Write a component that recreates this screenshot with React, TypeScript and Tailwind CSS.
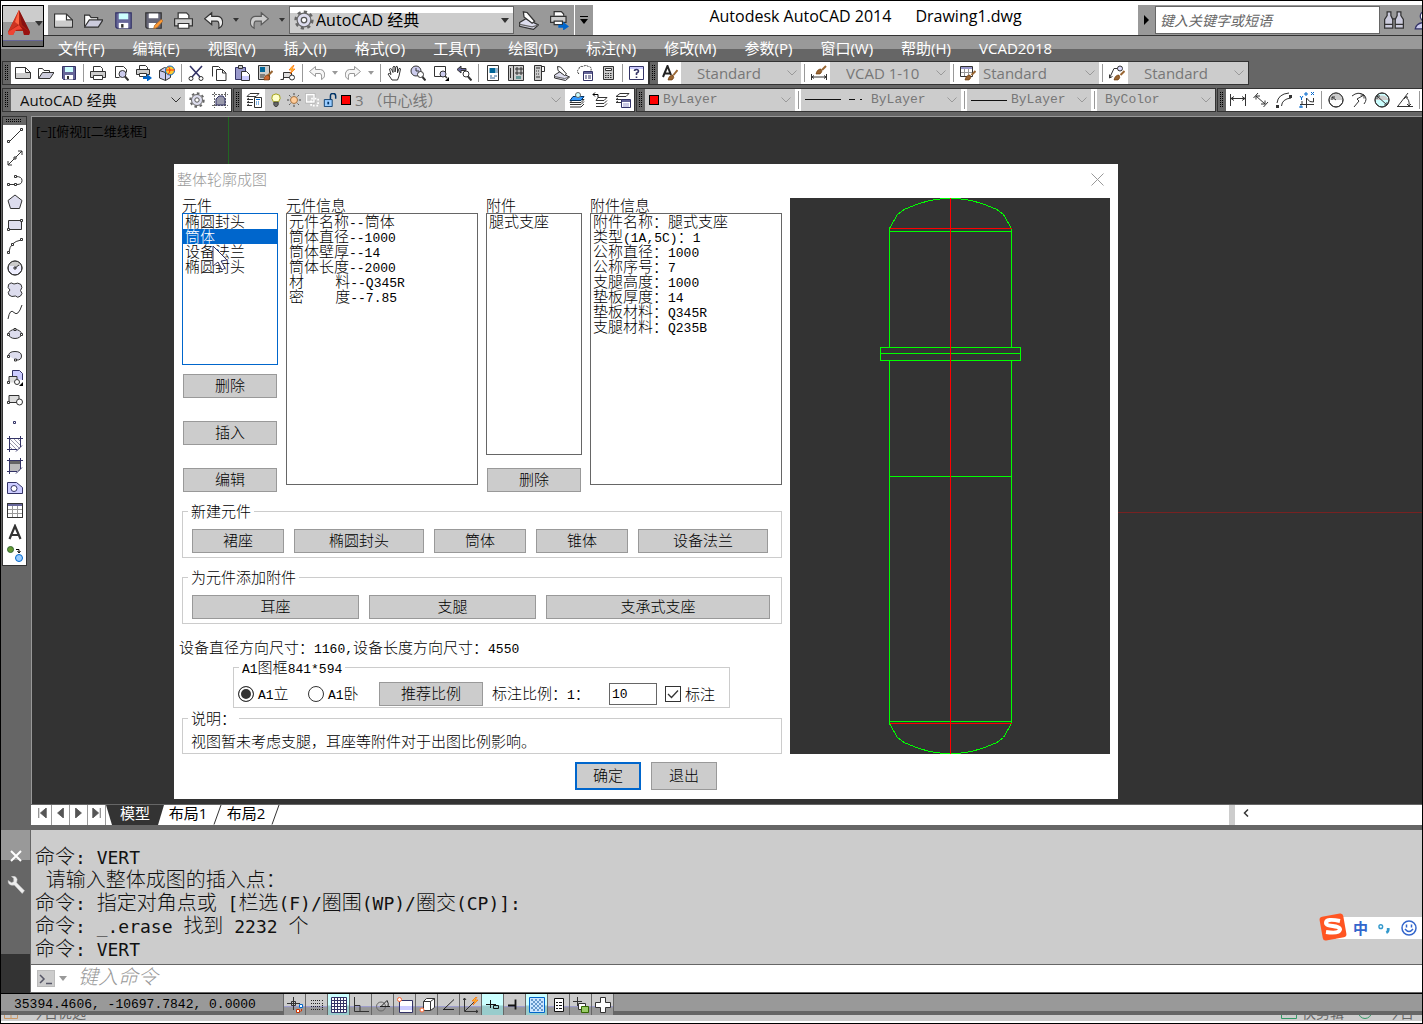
import { useState, type ReactNode } from "react";
import clsx from "clsx";

const ICONS: Record<string, ReactNode> = {
  new: (
    <>
      <path d="M.5 2.5h10l5 5v6H.5z" fill="#fff" />
      <path d="M1 8h14v5H1z" fill="#ccc" stroke="none" />
      <path d="M10.5 2.5v5h5" />
    </>
  ),
  open: (
    <>
      <path d="M.5 13V3.5h4l1.5 2h5.500v2" fill="#fff" />
      <path d="M.5 13.500l4-6h11.500l-4 6z" fill="#ccd" />
    </>
  ),
  save: (
    <>
      <path d="M1.500 1.500h13v13h-12l-1-1z" fill="#666699" stroke="#333366" />
      <path d="M4 2h8v5H4z" fill="#cff" stroke="none" />
      <path d="M4 10h8v4.500H4z" fill="#fff" stroke="none" />
      <path d="M6 11h2v3H6z" fill="#333" stroke="none" />
    </>
  ),
  saveAs: (
    <>
      <path d="M1.500 1.500h13v13h-12l-1-1z" fill="#667" stroke="#333" />
      <path d="M4 2h8v4H4zM4 10h6v4.500H4z" fill="#fff" stroke="none" />
      <path d="M8 15l1-3 5.500-5 1.500 1.500-5 5.500z" fill="#f93" stroke="#963" strokeWidth=".6" />
    </>
  ),
  print: (
    <>
      <path d="M3.500 6V1.500h7l2 2V6" fill="#fff" />
      <path d="M.5 6.500h15v6H.5z" fill="#ccc" />
      <path d="M3.500 10.500h9v4h-9z" fill="#fff" />
    </>
  ),
  preview: (
    <>
      <path d="M2.500 12.500v-11h8l3 3v3M2.500 12.500h4" fill="#fff" />
      <circle cx="9.500" cy="9" r="3.500" fill="#cce" />
      <path d="M12 11.500l3.500 4" strokeWidth="2" />
    </>
  ),
  publish: (
    <>
      <path d="M3.500 4V.5h6l2 2V4" fill="#fff" />
      <path d="M.5 4.500h13v5H.5z" fill="#ccc" />
      <path d="M3.500 8.500h7v3h-7z" fill="#fff" />
      <path d="M7 11.500h4V9l5 4-5 3.500V14H7z" fill="#06c" stroke="none" />
    </>
  ),
  sphere: (
    <>
      <path d="M.5 5.500l5-3 6 2v8l-5 3-6-2.500z" fill="#cce" />
      <path d="M.5 5.500l6 2v8" />
      <circle cx="11" cy="5.500" r="4.500" fill="#fc3" stroke="#06c" />
      <path d="M9 1.500q4 3 0 8M7 5h9" stroke="#f30" />
    </>
  ),
  cut: (
    <>
      <path d="M2 1l10 11M14 1L4 12" stroke="#336" strokeWidth="1.600" />
      <circle cx="3" cy="13.500" r="2" />
      <circle cx="13" cy="13.500" r="2" />
    </>
  ),
  copy: (
    <>
      <path d="M1.500 11.500v-10h6l2 2" fill="#fff" />
      <path d="M5.500 4.500h6l3.500 3.500v7.500H5.500z" fill="#fff" />
      <path d="M11.500 4.500V8H15" />
    </>
  ),
  paste: (
    <>
      <path d="M1.500 2.500h10v12h-10z" fill="#99c" stroke="#336" />
      <path d="M4.500.5h4v3h-4z" fill="#ccc" />
      <path d="M7.500 6.500h5l3 3v6h-8z" fill="#fff" />
      <path d="M8 11h7v4H8z" fill="#ccf" stroke="none" />
    </>
  ),
  match: (
    <>
      <path d="M1.500.5h11v14h-11z" fill="#ccc" />
      <path d="M3 2h5v5H3z" fill="#069" stroke="none" />
      <path d="M3 10h5M3 12h4" />
      <path d="M15.500 6l-5 5" stroke="#963" strokeWidth="2" />
      <path d="M7 15q0-5 4-5 3 2 1 5z" fill="#c63" stroke="#630" strokeWidth=".6" />
    </>
  ),
  block: (
    <>
      <path d="M.5 14.500h3v-7h8v5h-8" fill="#ddd" />
      <circle cx="12" cy="12.500" r="2.500" fill="#fff" />
      <path d="M13 .5l-4 4.500h3l-2 4 5-5h-3l2-3.500z" fill="#fc3" stroke="#f60" strokeWidth=".7" />
    </>
  ),
  undo: <path d="M6.500 1.500L.5 6.500l6 5v-3H11q2 0 1.500 6 4-2 3-6.500-1-3.500-4-3.500h-5z" fill="#eee" />,
  redo: <path d="M9.500 1.500l6 5-6 5v-3H5q-2 0-1.500 6-4-2-3-6.500 1-3.500 4-3.500h5z" fill="#eee" />,
  pan: (
    <path
      d="M5 15L1 9q1-1.500 3 .5L2.500 4q1-1 2 0L6 7.500V2q1-1.500 2 0v5l1-5.500q1.500-.5 1.500.5v6l1.500-4.500q1.500-.5 1.500.5L12 11l-1.500 4z"
      fill="#fff"
    />
  ),
  zoomRt: (
    <>
      <circle cx="6" cy="6" r="5" fill="#cce" />
      <path d="M6 3v3h3" />
      <circle cx="10.500" cy="9.500" r="3" fill="#fff" />
      <path d="M12.500 12l3 3.500" strokeWidth="2" />
    </>
  ),
  zoomWin: (
    <>
      <path d="M1.500 1.500h11v10h-11z" fill="#fff" />
      <circle cx="10" cy="9" r="3" fill="#cce" />
      <path d="M12 11l2 2" strokeWidth="1.500" />
      <path d="M16 12v4h-4z" fill="#000" stroke="none" />
    </>
  ),
  zoomPrev: (
    <>
      <path d="M5 1L1 4.500 5 8V5.500h5v-2H5z" fill="#669" />
      <circle cx="10" cy="9" r="3" fill="#fff" />
      <path d="M12 11.500l3.500 4" strokeWidth="2" />
    </>
  ),
  props: (
    <>
      <path d="M2.500.5h11v15h-11z" fill="#fff" />
      <path d="M4.500 3h6v5h-6z" fill="#069" stroke="none" />
      <path d="M12 3v5M5 11h2m2 0h3M5 13h5" stroke="#369" />
    </>
  ),
  center: (
    <>
      <path d="M.5.5h15v15H.5z" fill="#ccc" />
      <path d="M5.500.5v15M2.500 3v10M8 3h2v2H8zM12 3h2v2h-2zM8 7h2v2H8zM12 7h2v2h-2z" />
      <path d="M8 11h5v3H8z" fill="#699" stroke="none" />
    </>
  ),
  palettes: (
    <>
      <path d="M3.500.5h7v15h-7z" fill="#ccc" />
      <path d="M10.500 1.500h3v5h-3M5 3h4M5 6h1m1 0h1M5 9h1m1 0h1M5 12h4" />
    </>
  ),
  sheets: (
    <>
      <path d="M.5 10l5-3 10 5-4 3.500L.5 13z" fill="#dde" />
      <path d="M.5 11.500l10 2 5-1.500" stroke="#666" />
      <path d="M3.500 1.500l3 .5 6 7-2 1.500-6.500-5z" fill="#fff" />
    </>
  ),
  markup: (
    <>
      <path d="M2 9Q-1 6 2 4q0-3 4-2.500 3-2 5 0 4 0 3 4" fill="#fff" strokeDasharray="2 1" />
      <path d="M6.500 6.500h9v9h-9z" fill="#fff" stroke="#336" />
      <path d="M7 7h8v2H7z" fill="#669" stroke="none" />
      <path d="M8 11h2m1 0h3M8 13h2m1 0h3" stroke="#336" />
    </>
  ),
  calc: (
    <>
      <path d="M3.500 1.500h10v13h-10z" fill="#ccc" />
      <path d="M5.500 3.500h6v2h-6z" fill="#fff" />
      <path d="M5 8.500h7M5 10.500h7M5 12.500h7" strokeDasharray="1.500 1" />
    </>
  ),
  help: (
    <>
      <path d="M.5 1.500h14v13H.5z" fill="#fff" stroke="#336" />
      <path d="M1 2h13v2H1z" fill="#ccf" stroke="none" />
      <path d="M5.500 6q0-1.500 2-1.500t2 1.700q0 1-2 2V10m0 1.500V13" stroke="#336" strokeWidth="1.600" />
    </>
  ),
  textStyle: (
    <>
      <path d="M1 12L5.500 1 9 10M3 8.500h5" stroke="#222" strokeWidth="2" />
      <path d="M15.500 5l-4 5" stroke="#963" strokeWidth="2" />
      <path d="M6 15q1-5 5-5 2 3-1 5z" fill="#963" stroke="#630" strokeWidth=".6" />
    </>
  ),
  dimStyle: (
    <>
      <path d="M.5 9v6M15.500 9v6M1 12h14M3 10.500L1 12l2 1.500M13 10.500l2 1.500-2 1.500" />
      <path d="M15 1l-4 4" stroke="#963" strokeWidth="2" />
      <path d="M5 9q1-5 5-5 2 3-1 5z" fill="#963" stroke="#630" strokeWidth=".6" />
    </>
  ),
  tableStyle: (
    <>
      <path d="M.5 1.500h12v10H.5z" fill="#fff" />
      <path d="M1 2h11v2H1z" fill="#99c" stroke="none" />
      <path d="M1 7.500h11M4.500 4v7M8.500 4v7" stroke="#999" />
      <path d="M15.500 6l-4 4" stroke="#963" strokeWidth="2" />
      <path d="M5 15q1-5 5-5 2 3-1 5z" fill="#963" stroke="#630" strokeWidth=".6" />
    </>
  ),
  leaderStyle: (
    <>
      <path d="M.5 13L5 3.500h4M.5 13V9.500M.5 13l3-1.500" />
      <circle cx="11" cy="3.500" r="2.500" fill="#ddf" />
      <path d="M15.500 6l-4 4" stroke="#963" strokeWidth="2" />
      <path d="M5 15q1-5 5-5 2 3-1 5z" fill="#963" stroke="#630" strokeWidth=".6" />
    </>
  ),
  gear: (
    <>
      <circle cx="8" cy="8" r="6.700" strokeWidth="2" strokeDasharray="2.600 2.600" stroke="#666" />
      <circle cx="8" cy="8" r="5.500" fill="#dde" stroke="#666" />
      <circle cx="8" cy="8" r="2.200" fill="#fff" stroke="#555" />
    </>
  ),
  workspace: (
    <>
      <path d="M2.500 0v16M13.500 0v16M0 2.500h16M0 13.500h16" stroke="#666" strokeDasharray="2 1" />
      <path d="M4 13V7l3-3h4l2 3v6z" fill="#99a" stroke="#336" />
    </>
  ),
  layerProps: (
    <>
      <path d="M4 1.500h9l-3 3H1zM1 7.500l2-1.500M1 7.500h6M1 10.500l2-1.500M1 10.500h6M1 13.500l2-1.500M1 13.500h5" />
      <path d="M8.500 5.500h7v10h-7z" fill="#fff" />
      <path d="M10 7.500h4M10 10h1m1 0h1m-3 2h1m1 0h1" stroke="#06c" />
    </>
  ),
  bulb: (
    <>
      <path d="M5 10q-3-4-1-7.500 4-3 8 0 2 3.500-1 7.500z" fill="#ffc" stroke="#990" />
      <path d="M5.500 10.500h5v3l-1.500 2h-2l-1.500-2z" fill="#666" />
    </>
  ),
  sun: (
    <>
      <circle cx="8" cy="8" r="4" fill="#fc9" stroke="#963" />
      <path d="M8 0v2.500M8 13.500V16M0 8h2.500M13.500 8H16M2.500 2.500L4 4M12 12l1.500 1.500M13.500 2.500L12 4M4 12l-1.500 1.500" />
    </>
  ),
  freeze: (
    <>
      <path d="M1.500 1.500h9v9h-9z" fill="#ccc" stroke="#fff" strokeWidth="2" />
      <path d="M.5.5h11v11H.5z" stroke="#999" strokeWidth=".6" />
      <path d="M7 6.500h8v8H7z" stroke="#fff" strokeWidth="2" strokeDasharray="2 2" />
    </>
  ),
  unlock: (
    <>
      <path d="M1.500 7.500h9v8h-9z" fill="#9cf" stroke="#036" />
      <path d="M8.500 7V3.500q0-3 3-3t3 3v3" stroke="#036" strokeWidth="1.700" />
      <path d="M6 10v3" stroke="#036" strokeWidth="2" />
    </>
  ),
  layerCur: (
    <>
      <path d="M4 7.500h11l-3 3H1zM1 13l1-1M1 12.500h11l3-3M1 15h11l3-3" fill="#fff" />
      <path d="M4 4.500h11l-3 4H1z" fill="#39f" stroke="#036" />
      <circle cx="9" cy="3" r="2.500" fill="#cff" stroke="#666" />
    </>
  ),
  layerPrev: (
    <>
      <path d="M6 5.500h9l-3 3H4zM4 11.500h8l3-3M4 14.500h8l3-3" />
      <path d="M1 2.500h5v3M3 .5l-2 2 2 2" stroke="#000" />
    </>
  ),
  layerState: (
    <>
      <path d="M5 1.500h9l-3 3H1zM1 7.500h6M1 7.500l2-1.500M1 10.500h5M1 10.500l2-1.500" />
      <path d="M6.500 7.500h9v8h-9z" fill="#fff" stroke="#336" />
      <path d="M7 8h8v2H7z" fill="#669" stroke="none" />
      <path d="M8 12h6M8 14h6" stroke="#99c" />
    </>
  ),
  dimLinear: <path d="M.5 2v12M15.500 2v12M1 6.500h14M4 4.500l-3 2 3 2M12 4.500l3 2-3 2" />,
  dimAligned: <path d="M3 4l9 8M3 7.500V4h4M12 8.500V12H8M.5 6L5 1M10.500 15l4.500-5" />,
  dimArc: (
    <>
      <path d="M1 11Q2 2 13 1M5.500 14Q6 7 15 6" />
      <path d="M0 13h3v3H0zM13 3h3v3h-3z" fill="#333" stroke="none" />
    </>
  ),
  dimOrd: (
    <>
      <path d="M1 12.500h14M7.500 16V6q3 5 7 4V6M3 12V9" />
      <path d="M1 4l1.500 2L4 4M2.500 6v2M6 1h2v2H6zM12 0l3 3M15 0l-3 3M1 14h2v2H1z" stroke="#06c" />
    </>
  ),
  dimRadius: (
    <>
      <circle cx="8" cy="8" r="7" fill="#fff" />
      <path d="M1 8a7 7 0 0 1 14 0z" fill="#ccc" stroke="none" />
      <path d="M8 8L4 5M4 8V5h3" />
      <circle cx="8" cy="8" r="7" />
    </>
  ),
  dimJog: <path d="M1 4q6-5 12-1 4 4 0 9M3 15l5-6-2-2 7-4M9.500 3H13v3.500" />,
  dimDia: (
    <>
      <circle cx="8" cy="8" r="7" fill="#cff" />
      <path d="M1.500 8a7 7 0 0 1 13 0z" fill="#ccc" stroke="none" />
      <path d="M3 4l10 9M3 7V4h3M10 13h3v-3" />
      <circle cx="8" cy="8" r="7" />
    </>
  ),
  dimAngle: <path d="M0 14.500h16M1 14L11 1M8 5q5 2 4 9M7 7l2-2.500 2 1M10 12l2 2 2-2" />,
  line: (
    <>
      <path d="M2 14L14 2" />
      <path d="M.5 12.500h2v2h-2zM13.500.5h2v2h-2z" fill="#fff" />
    </>
  ),
  xline: (
    <>
      <path d="M1 15L15 1M1 11v4h4M11 1h4v4" />
      <path d="M7 7h2v2H7z" fill="#fff" />
    </>
  ),
  pline: (
    <>
      <path d="M2 12.500h8q5 0 5-4t-6-4" />
      <path d="M.5 11.500h2v2h-2zM7.500 11.500h2v2h-2zM7.500 3.500h2v2h-2z" fill="#fff" />
    </>
  ),
  polygon: <path d="M8 1l7 5.500-2.500 8h-9L1 6.500z" fill="#dde" />,
  rect: (
    <>
      <path d="M1.500 4.500h13v9h-13z" fill="#dde" />
      <path d="M.5 12.500h2v2h-2zM13.500 3.500h2v2h-2z" fill="#fff" />
    </>
  ),
  arc: (
    <>
      <path d="M2 14Q3 4 14 2" />
      <path d="M.5 13.500h2v2h-2zM4.500 5.500h2v2h-2zM13.500.5h2v2h-2z" fill="#fff" />
    </>
  ),
  circle: (
    <>
      <circle cx="8" cy="8" r="7" fill="#eef" />
      <path d="M1.500 6a7 7 0 0 1 13 0z" fill="#ccc" stroke="none" />
      <circle cx="8" cy="8" r="7" />
      <path d="M8 8l4-3M7 7h2v2H7z" />
    </>
  ),
  cloud: (
    <path
      d="M3 8Q0 6 1.500 2.500 4-.5 7 2q4-2 7 .5 2 3-.5 6 3 3 0 5.500-3 2.500-5 0-4 1.500-6.500-1Q0 10 3 8z"
      fill="#dde"
    />
  ),
  spline: <path d="M1 15Q3 4 7 8.500t8-7.500" />,
  ellipse: (
    <>
      <ellipse cx="8" cy="8" rx="6.500" ry="4.500" fill="#dde" />
      <path d="M.5 7.500h2v2h-2zM13.500 7.500h2v2h-2zM7 2.500h2v2H7z" fill="#fff" />
    </>
  ),
  ellipseArc: (
    <>
      <path d="M1.500 8q0-4.500 6.500-4.500T14.500 8 9 12" fill="#dde" />
      <path d="M.5 7.500h2v2h-2zM7.500 11h2v2h-2z" fill="#fff" />
    </>
  ),
  insert: (
    <>
      <path d="M5.500 8V.5h7l3 3V10" fill="#ccf" stroke="#336" />
      <path d="M2 12.500v-6h8v6" fill="#ddd" />
      <circle cx="10" cy="12" r="2.500" fill="#fff" />
      <path d="M.5 11.500h2v2h-2z" fill="#fff" />
      <path d="M16 12v4h-4z" fill="#000" stroke="none" />
    </>
  ),
  makeBlock: (
    <>
      <path d="M2 10.500v-7h10v7z" fill="#ddd" />
      <circle cx="12.500" cy="10" r="3" fill="#fff" />
      <path d="M.5 9.500h2v2h-2z" fill="#fff" />
    </>
  ),
  point: <path d="M6.500 7.500h2v2h-2z" stroke="#336" />,
  hatch: (
    <>
      <path d="M3 3l10 10M3 7l6 6M7 3l6 6M3 11l2 2M11 3l2 2" stroke="#99a" />
      <path d="M2.500 0v16M13.500 0v11M0 2.500h16M0 13.500h10M9 15.500l6-6" stroke="#336" />
    </>
  ),
  gradient: (
    <>
      <path d="M3 3h10v3H3z" fill="#666" stroke="none" />
      <path d="M3 6h10v7H3z" fill="#bbb" stroke="none" />
      <path d="M2.500 0v16M13.500 0v11M0 2.500h16M0 13.500h10M9 15.500l6-6" stroke="#336" />
    </>
  ),
  region: (
    <>
      <path d="M.5 2.500h9l6 5v6H.5z" fill="#ccf" stroke="#336" />
      <circle cx="7" cy="8.500" r="3" fill="#fff" stroke="#336" />
    </>
  ),
  table: (
    <>
      <path d="M.5 1.500h15v14H.5z" fill="#fff" />
      <path d="M1 2h14v2H1z" fill="#669" stroke="none" />
      <path d="M1 7.500h14M1 11.500h14M5.500 4v11M10.500 4v11" stroke="#999" />
      <path d="M.5 1.500h15v14H.5z" />
    </>
  ),
  mtext: <path d="M2.500 15L8 2l5.500 13M4.500 11h7" stroke="#333" strokeWidth="2.200" />,
  addSel: (
    <>
      <circle cx="3.500" cy="3.500" r="3" fill="#693" stroke="#363" />
      <circle cx="12" cy="12" r="3.500" fill="#9cf" stroke="#06c" />
      <path d="M9 3.500h3V6M10.500 5L12 7l1.500-2" stroke="#000" />
    </>
  ),
  infer: (
    <>
      <path d="M6.500 0v13M0 6.500h13M4.500 4.500h4v4h-4z" />
      <path d="M12.500 7.500h3v3h-3z" fill="#fff" stroke="#06c" />
      <path d="M9.500 12.500h3v3h-3zM14.500 12v2h-2" fill="#fff" stroke="#c30" />
    </>
  ),
  snap: <path d="M2 3.500h9M2 6.500h9M2 9.500h9M2 12.500h9M13.500 3v1m0 2v7" stroke="#222" strokeDasharray="1 1" />,
  grid: (
    <path
      d="M.5.5h15v15H.5zM3.500.5v15M6.500.5v15M9.500.5v15M12.500.5v15M.5 3.500h15M.5 6.500h15M.5 9.500h15M.5 12.500h15"
      fill="#fff"
      stroke="#336"
    />
  ),
  ortho: <path d="M1.500 0v14.500H16M2 8.500h5v6" />,
  polar: (
    <>
      <circle cx="6" cy="9.500" r="4.500" stroke="#666" />
      <path d="M5 9.500h10M6 9.500l6-6q2 3 1 6" stroke="#222" />
    </>
  ),
  osnap: (
    <>
      <path d="M2.500 3.500h13v12h-13z" fill="#fff" stroke="#336" />
      <path d="M3 9h12v4H3z" fill="#ccf" stroke="none" />
      <circle cx="2.500" cy="2.500" r="2" fill="#fff" stroke="#f63" />
    </>
  ),
  osnap3d: (
    <>
      <path d="M4.500 4.500l3-3h8v9l-4 3h-7z" fill="#fff" />
      <path d="M4.500 4.500h7v9M11.500 4.500l4-3" />
      <circle cx="3" cy="13" r="2" fill="#fff" stroke="#f63" />
    </>
  ),
  otrack: <path d="M2 12.500h11M3 12L13 2.500" stroke="#222" />,
  ducs: (
    <>
      <path d="M1.500 1v13.500H15M2 14L11 5M0 3l1.500-2L3 3M13 13l2 1.500-2 1.500" />
      <path d="M13 0l-4 4h3l-2 4 5-5h-3l2-3z" fill="#fc3" stroke="#f60" strokeWidth=".7" />
    </>
  ),
  dyn: <path d="M1 7.500h10M5.500 3v8M8.500 8.500h5v3h-5z" stroke="#111" />,
  lwt: <path d="M1 8.500h8M8.500 2.500v10" stroke="#111" strokeWidth="1.800" />,
  tpy: (
    <>
      <path d="M.5.5h15v15H.5z" fill="#cce6ff" stroke="#06c" />
      <path d="M2 3h12M2 7h12M2 11h12" stroke="#69c" strokeDasharray="2 2" strokeWidth="2" />
      <path d="M4 5h10M4 9h10M4 13h10" stroke="#69c" strokeDasharray="2 2" strokeWidth="2" />
    </>
  ),
  qp: (
    <>
      <path d="M3.500 1.500h9v13h-9z" fill="#fff" stroke="#111" />
      <path d="M5 5.500h2m1 0h3M5 8.500h2m1 0h3M5 11.500h2m1 0h3" stroke="#111" />
    </>
  ),
  sc: (
    <>
      <path d="M4.500 0v9M0 4.500h9" />
      <path d="M5.500 6.500h7v6h-7z" fill="#fff" />
      <path d="M8.500 9.500h7v6h-7z" fill="#9c6" stroke="#360" />
    </>
  ),
  am: <path d="M5.500.5h5v5h5v5h-5v5h-5v-5h-5v-5h5z" fill="#fff" />,
  binoculars: (
    <>
      <path d="M.5 14.500v-7l2-3V1.500h3v3l1.500 3v7zM9 14.500v-7l1.500-3v-3h3v3l2 3v7z" fill="#ccd" />
      <path d="M6.500 7h3M.5 11.500H7M9 11.500h6.500" />
    </>
  ),
  person: (
    <>
      <circle cx="9" cy="5" r="4" fill="#fff" stroke="#336" />
      <path d="M1 15q1-5 8-5t7 5z" fill="#cce" stroke="#336" />
    </>
  ),
  wrench: (
    <path d="M1 4l3 2 2-1V2L4 .5q4-1 5 2.500L8.500 6l7 7-2 2.500-7-7.500Q1 9 1 4z" fill="#eee" stroke="#ccc" strokeWidth=".5" />
  ),
};

function Icon({ name, className = "size-4" }: { name: string; className?: string }) {
  return (
    <svg viewBox="0 0 16 16" className={clsx("shrink-0", className)} fill="none" stroke="#333" aria-hidden="true">
      {ICONS[name]}
    </svg>
  );
}

function Caret({ className = "text-[#333]" }: { className?: string }) {
  return (
    <svg viewBox="0 0 8 5" className={clsx("w-2 shrink-0", className)} fill="currentColor" aria-hidden="true">
      <path d="M0 0h8L4 5z" />
    </svg>
  );
}

const LATIN = "font-['Liberation_Mono',monospace] text-[13px]";
const LATIN_LG = "font-['DejaVu_Sans_Mono',monospace] text-[18px]";

// Latin runs are set in a half-width face next to the full-width glyphs.
function Mono({ text, latin = LATIN }: { text: string; latin?: string }) {
  return (
    <>
      {text.split(/([\x20-\x7e]+)/).map((part, i) =>
        i % 2 ? (
          <span key={i} className={clsx("whitespace-pre", latin)}>
            {part}
          </span>
        ) : (
          part
        ),
      )}
    </>
  );
}

function Dots({ className }: { className: string }) {
  return (
    <svg className={className} aria-hidden="true">
      <defs>
        <pattern id="dots" width="2" height="2" patternUnits="userSpaceOnUse">
          <rect width="1" height="1" fill="#000" />
        </pattern>
      </defs>
      <rect width="100%" height="100%" fill="url(#dots)" />
    </svg>
  );
}

function Grip() {
  return (
    <div className="flex w-2 shrink-0 items-center justify-center bg-[#666]">
      <Dots className="h-4 w-1" />
    </div>
  );
}

function Strip({ children, className }: { children: ReactNode; className?: string }) {
  return (
    <div className={clsx("flex h-6 shrink-0 border border-[#333] bg-white", className)}>
      <Grip />
      {children}
    </div>
  );
}

// "|" is a separator, "v" a small drop-down arrow, anything else an icon button
function Tools({ items }: { items: string[] }) {
  return (
    <>
      {items.map((name, i) => {
        if (name === "|") {
          return (
            <span key={i} className="flex w-[6px] shrink-0 items-center justify-center">
              <span className="h-[18px] w-px bg-[#999]" />
            </span>
          );
        }
        if (name === "v") {
          return (
            <button key={i} aria-label="more" className="flex w-[13px] shrink-0 items-center justify-center">
              <Caret className="w-[6px] text-[#999]" />
            </button>
          );
        }
        return (
          <button
            key={i}
            aria-label={name}
            className={clsx(
              "flex w-[23px] shrink-0 items-center justify-center",
              (name === "undo" || name === "redo") && "opacity-50",
            )}
          >
            <Icon name={name} />
          </button>
        );
      })}
    </>
  );
}

interface ComboProps {
  label: string;
  value: string;
  className: string;
  children?: ReactNode;
  dark?: boolean;
  font?: string;
}

function Combo({ label, value, className, children, dark, font = "text-[15px]" }: ComboProps) {
  return (
    <div className={clsx("relative flex shrink-0 items-center gap-1 bg-[#ccc]", className)}>
      {children}
      <select
        aria-label={label}
        className={clsx("h-full min-w-0 flex-1 appearance-none bg-transparent pr-5", dark ? "text-[#111]" : "text-[#777]", font)}
      >
        <option>{value}</option>
      </select>
      <svg
        viewBox="0 0 10 6"
        className={clsx("pointer-events-none absolute right-1 top-2 w-[10px]", dark ? "stroke-[#333]" : "stroke-[#999]")}
        fill="none"
      >
        <path d="M.5.5L5 5 9.500.5" />
      </svg>
    </div>
  );
}

const MENUS = [
  "文件(F)", "编辑(E)", "视图(V)", "插入(I)", "格式(O)", "工具(T)", "绘图(D)",
  "标注(N)", "修改(M)", "参数(P)", "窗口(W)", "帮助(H)", "VCAD2018",
];

function TitleBar() {
  return (
    <header className="flex h-[34px] shrink-0 items-end bg-white pl-[47px]">
      <div className="flex h-[30px] items-center bg-[#999]">
        {["new", "open", "save", "saveAs", "print", "undo"].map((name) => (
          <button key={name} aria-label={name} className="flex w-[30px] justify-center">
            <Icon name={name} className="size-[19px]" />
          </button>
        ))}
        <button aria-label="undo list" className="flex w-[16px] justify-center">
          <Caret className="w-[6px] text-[#333]" />
        </button>
        <button aria-label="redo" className="flex w-[30px] justify-center opacity-60">
          <Icon name="redo" className="size-[19px]" />
        </button>
        <button aria-label="redo list" className="flex w-[15px] justify-center">
          <Caret className="w-[6px] text-[#333]" />
        </button>
        <div className="relative flex h-7 w-[225px] items-center border border-[#666] bg-[linear-gradient(#fff_25%,#ccc_25%)] pl-1">
          <Icon name="gear" className="size-5" />
          <select aria-label="工作空间" className="h-full min-w-0 flex-1 appearance-none bg-transparent pl-[2px] text-base text-black">
            <option>AutoCAD 经典</option>
          </select>
          <span className="pointer-events-none absolute right-1">
            <Caret />
          </span>
        </div>
        <button aria-label="sheets" className="flex w-[30px] justify-center">
          <Icon name="sheets" className="size-5" />
        </button>
        <button aria-label="publish" className="flex w-[30px] justify-center">
          <Icon name="publish" className="size-[19px]" />
        </button>
      </div>
      <button aria-label="customize" className="ml-px flex h-[30px] w-[18px] shrink-0 flex-col items-center justify-center gap-[2px] bg-[#999]">
        <span className="h-px w-2 bg-black" />
        <Caret className="text-black" />
      </button>
      <h1 className="flex h-[30px] flex-1 justify-center gap-6 whitespace-nowrap text-base leading-[22px] text-black">
        <span>Autodesk AutoCAD 2014</span>
        <span>Drawing1.dwg</span>
      </h1>
      <div className="flex h-[30px] w-[284px] shrink-0 items-center overflow-hidden bg-[#999]">
        <svg viewBox="0 0 5 10" className="mx-[6px] w-[5px] shrink-0">
          <path d="M0 0l5 5-5 5z" />
        </svg>
        <input
          aria-label="搜索"
          placeholder="键入关键字或短语"
          className="h-7 w-[225px] shrink-0 border border-[#666] bg-white px-1 text-sm italic placeholder:text-[#666]"
        />
        <button aria-label="search" className="ml-1 shrink-0">
          <Icon name="binoculars" className="size-5" />
        </button>
        <button aria-label="sign in" className="ml-[10px] shrink-0">
          <Icon name="person" className="size-5" />
        </button>
      </div>
    </header>
  );
}

function AppButton() {
  return (
    <button
      aria-label="AutoCAD"
      className="absolute left-[1px] top-1 flex h-[42px] w-[42px] flex-col border border-black bg-[linear-gradient(#ccc_40%,#999_40%)] pt-1"
    >
      <span className="flex items-center gap-1 pl-1">
        <svg viewBox="0 0 24 26" className="h-[26px] w-6">
          <path d="M12 0L23 22l-1 3h-5l-1-4H8l-2 4H2l-1-3z" fill="#a21" />
          <path d="M12 0v14L1 22z" fill="#c32" />
          <path d="M12 0L8 12l4 3z" fill="#f64" />
          <path d="M12 0l11 22-8-7z" fill="#811" />
          <path d="M1 22l11-7 5 4-8 1-3 5H2z" fill="#e43" />
          <path d="M12 15l11 7-1 3h-5l-1-5z" fill="#911" />
        </svg>
        <Caret />
      </span>
      <span className="mt-auto h-[6px] w-full border-t border-[#669] bg-[#666]" />
    </button>
  );
}

function Toolbars() {
  return (
    <div className="flex shrink-0 flex-col gap-[3px] overflow-hidden bg-[#666] pb-1 pl-px">
      <div className="flex">
        <Strip>
          <Tools
            items={[
              "new", "open", "save", "|", "print", "preview", "publish", "sphere", "|", "cut", "copy", "paste",
              "match", "block", "|", "undo", "v", "redo", "v", "|", "pan", "zoomRt", "zoomWin", "zoomPrev", "|",
              "props", "center", "palettes", "sheets", "markup", "calc", "|", "help",
            ]}
          />
        </Strip>
        <Strip>
          <Tools items={["textStyle"]} />
          <Combo label="文字样式" value="Standard" className="w-[120px] pl-4" />
          <Tools items={["|", "dimStyle"]} />
          <Combo label="标注样式" value="VCAD 1-10" className="w-[120px] pl-4" />
          <Tools items={["|", "tableStyle"]} />
          <Combo label="表格样式" value="Standard" className="w-[120px] pl-1" />
          <Tools items={["|", "leaderStyle"]} />
          <Combo label="多重引线样式" value="Standard" className="w-[120px] pl-4" />
        </Strip>
      </div>
      <div className="flex gap-px">
        <Strip>
          <Combo label="工作空间" value="AutoCAD 经典" dark className="w-[174px] pl-[9px]" />
          <Tools items={["gear", "workspace"]} />
        </Strip>
        <Strip>
          <Tools items={["layerProps"]} />
          <Combo label="图层" value="3 （中心线）" className="w-[300px] pl-1">
            <Icon name="bulb" className="size-[14px]" />
            <Icon name="sun" className="size-[14px]" />
            <Icon name="freeze" className="size-[14px]" />
            <Icon name="unlock" className="size-[14px]" />
            <span className="size-[10px] border border-black bg-[#f00]" />
          </Combo>
          <Tools items={["layerCur", "layerPrev", "layerState"]} />
        </Strip>
        <Strip>
          <Combo label="颜色" value="ByLayer" className="w-[150px] pl-1" font={LATIN}>
            <span className="size-[10px] border border-black bg-[#f00]" />
          </Combo>
          <Tools items={["|"]} />
          <Combo label="线型" value="ByLayer" className="w-[160px] pl-1" font={LATIN}>
            <svg viewBox="0 0 62 2" className="h-[2px] w-[62px] shrink-0" stroke="#111">
              <path d="M0 .5h36m8 0h6m5 0h2" shapeRendering="crispEdges" />
            </svg>
          </Combo>
          <Tools items={["|"]} />
          <Combo label="线宽" value="ByLayer" className="w-[124px] pl-1" font={LATIN}>
            <span className="h-px w-9 shrink-0 bg-[#111]" />
          </Combo>
          <Tools items={["|"]} />
          <Combo label="打印样式" value="ByColor" className="w-[118px] pl-2" font={LATIN} />
        </Strip>
        <Strip className="flex-1">
          <Tools items={["dimLinear", "dimAligned", "dimArc", "dimOrd", "|", "dimRadius", "dimJog", "dimDia", "dimAngle", "|"]} />
        </Strip>
      </div>
    </div>
  );
}

const DRAW_TOOLS = [
  "line", "xline", "pline", "polygon", "rect", "arc", "circle", "cloud", "spline", "ellipse",
  "ellipseArc", "insert", "makeBlock", "point", "hatch", "gradient", "region", "table", "mtext", "addSel",
];

function DrawBar() {
  return (
    <div className="w-[30px] shrink-0 pl-px">
      <div className="flex w-[25px] flex-col border border-[#333] bg-white">
        <div className="flex h-2 items-center bg-[#666] px-[3px]">
          <Dots className="h-1 w-4" />
        </div>
        {DRAW_TOOLS.map((name) => (
          <button key={name} aria-label={name} className="flex h-[22px] items-center justify-center">
            <Icon name={name} />
          </button>
        ))}
      </div>
    </div>
  );
}

function PushButton({ children, className }: { children: ReactNode; className?: string }) {
  return (
    <button className={clsx("h-6 shrink-0 border border-[#999] bg-[#ccc] pb-[2px] text-black", className)}>
      {children}
    </button>
  );
}

interface ListProps {
  title: string;
  items: string[];
  className: string;
  selected?: number;
  onSelect?: (i: number) => void;
}

function ListBox({ title, items, className, selected = -1, onSelect }: ListProps) {
  return (
    <div className="flex flex-col">
      <h3 className="h-[15px]">{title}</h3>
      <ul role="listbox" aria-label={title} className={clsx("border bg-white", className)}>
        {items.map((item, i) => (
          <li
            key={i}
            role="option"
            aria-selected={i === selected}
            onClick={() => onSelect?.(i)}
            className={clsx("h-[15px] whitespace-nowrap pl-[2px]", i === selected && "bg-[#06c] text-white")}
          >
            <Mono text={item} />
          </li>
        ))}
      </ul>
    </div>
  );
}

function Group({ title, children, className }: { title: string; children: ReactNode; className?: string }) {
  return (
    <fieldset className={clsx("border border-[#ccc]", className)}>
      <legend className="ml-[5px] h-[15px] px-[3px]">
        <Mono text={title} />
      </legend>
      {children}
    </fieldset>
  );
}

function Vessel() {
  return (
    <svg viewBox="0 0 320 556" className="h-[556px] w-80 shrink-0 bg-[#333]" fill="none" shapeRendering="crispEdges">
      <g stroke="#0f0">
        <path d="M99.500 30.500L107.500 16.500 114 11.500 129 5.500 140 2.500 153 .5H168L181 2.500 192 5.500 207 11.500 213.500 16.500 221.500 30.500" />
        <path d="M99.500 30v119.500M221.500 30v119.500M99.500 33.500h122" />
        <path d="M90.500 149.500h140v13h-140zM90.500 155.500h140" />
        <path d="M99.500 162.500v363M221.500 162.500v363M99.500 278.500h122M99.500 523.500h122" />
        <path d="M99.500 525.500L107.500 539.500 114 544.500 129 550.500 140 553.500 153 555.500H168L181 553.500 192 550.500 207 544.500 213.500 539.500 221.500 525.500" />
      </g>
      <path d="M99.500 30.500h122M99.500 525.500h122M160.500 0v556" stroke="#f00" />
    </svg>
  );
}

const PARTS = ["椭圆封头", "筒体", "设备法兰", "椭圆封头"];
const PART_INFO = ["元件名称--筒体", "筒体直径--1000", "筒体壁厚--14", "筒体长度--2000", "材    料--Q345R", "密    度--7.85"];
const ATTACH_INFO = [
  "附件名称：腿式支座", "类型(1A,5C)：1", "公称直径：1000", "公称序号：7",
  "支腿高度：1000", "垫板厚度：14", "垫板材料：Q345R", "支腿材料：Q235B",
];

function OutlineDialog() {
  const [part, setPart] = useState(1);
  const [sheet, setSheet] = useState("A1立");
  const [annotate, setAnnotate] = useState(true);

  return (
    <section
      role="dialog"
      aria-label="整体轮廓成图"
      className="absolute left-[142px] top-[47px] w-[944px] bg-white px-2 pb-[9px] text-[15px] font-light leading-[15px] text-black"
    >
      <header className="-ml-[5px] flex h-[34px] items-center justify-between pb-1 pr-[6px] text-[#999]">
        <h2>整体轮廓成图</h2>
        <button aria-label="关闭">
          <svg viewBox="0 0 13 13" className="size-[13px]" stroke="#999">
            <path d="M.5.5l12 12M12.500.5l-12 12" />
          </svg>
        </button>
      </header>
      <div className="flex gap-2">
        <div className="flex w-[600px] flex-col">
          <div className="flex items-start gap-2">
            <div className="relative flex flex-col">
              <ListBox title="元件" items={PARTS} selected={part} onSelect={setPart} className="h-[152px] w-24 border-[#06c]" />
              <div className="mt-[9px] flex flex-col gap-[23px] px-px">
                <PushButton>删除</PushButton>
                <PushButton>插入</PushButton>
                <PushButton>编辑</PushButton>
              </div>
              <svg viewBox="0 0 16 26" className="pointer-events-none absolute left-[30px] top-[47px] w-4">
                <path d="M1 1v20l5-4 4 8 3-2-4-7 6-1z" fill="#fff" stroke="#336" />
              </svg>
            </div>
            <ListBox title="元件信息" items={PART_INFO} className="h-[272px] w-48 border-[#666]" />
            <div className="flex flex-col gap-[13px]">
              <ListBox title="附件" items={["腿式支座"]} className="h-[242px] w-24 border-[#666]" />
              <PushButton className="mx-px">删除</PushButton>
            </div>
            <ListBox title="附件信息" items={ATTACH_INFO} className="h-[272px] w-48 border-[#666]" />
          </div>
          <Group title="新建元件" className="mt-3">
            <div className="flex gap-[10px] px-[9px] pb-1 pt-[10px]">
              <PushButton className="w-[92px]">裙座</PushButton>
              <PushButton className="w-[130px]">椭圆封头</PushButton>
              <PushButton className="w-[92px]">筒体</PushButton>
              <PushButton className="w-[92px]">锥体</PushButton>
              <PushButton className="w-[130px]">设备法兰</PushButton>
            </div>
          </Group>
          <Group title="为元件添加附件" className="mt-3">
            <div className="flex gap-[10px] px-[9px] pb-1 pt-[10px]">
              <PushButton className="w-[167px]">耳座</PushButton>
              <PushButton className="w-[167px]">支腿</PushButton>
              <PushButton className="w-[224px]">支承式支座</PushButton>
            </div>
          </Group>
          <p className="-ml-[3px] mt-4 h-[15px]">
            <Mono text="设备直径方向尺寸：1160,设备长度方向尺寸：4550" />
          </p>
          <Group title="A1图框841*594" className="ml-[51px] mt-[5px] w-[497px]">
            <div className="flex h-8 items-center pb-px pl-1 pt-[7px]">
              {["A1立", "A1卧"].map((name) => (
                <label key={name} className="flex w-[70px] items-center gap-1">
                  <input
                    type="radio"
                    name="sheet"
                    checked={sheet === name}
                    onChange={() => setSheet(name)}
                    className="size-4 shrink-0 appearance-none rounded-full border border-[#333] bg-white checked:bg-[#333] checked:shadow-[inset_0_0_0_2px_#fff]"
                  />
                  <span>
                    <Mono text={name} />
                  </span>
                </label>
              ))}
              <PushButton className="ml-px w-[104px]">推荐比例</PushButton>
              <label htmlFor="scale" className="w-[126px] pl-[9px]">
                <Mono text="标注比例：1：" />
              </label>
              <input id="scale" defaultValue="10" className={clsx("h-[22px] w-12 border border-[#666] bg-white px-[2px]", LATIN)} />
              <label className="relative ml-2 flex items-center gap-1">
                <input
                  type="checkbox"
                  checked={annotate}
                  onChange={() => setAnnotate(!annotate)}
                  className="size-4 appearance-none border border-[#333] bg-white"
                />
                {annotate && (
                  <svg viewBox="0 0 16 16" className="pointer-events-none absolute left-0 size-4" fill="none" stroke="#333" strokeWidth="1.300">
                    <path d="M3 8l3.500 3.500L13 4.500" />
                  </svg>
                )}
                标注
              </label>
            </div>
          </Group>
          <Group title="说明：" className="mt-[3px]">
            <p className="px-2 pb-1 pt-2">视图暂未考虑支腿，耳座等附件对于出图比例影响。</p>
          </Group>
        </div>
        <Vessel />
      </div>
      <footer className="mt-2 flex gap-[10px] pl-[393px]">
        <button className="h-7 w-[66px] border-2 border-[#06c] bg-[#ccc] pb-[2px]">确定</button>
        <button className="h-7 w-[66px] border border-[#999] bg-[#ccc] pb-[2px]">退出</button>
      </footer>
    </section>
  );
}

function Drawing() {
  return (
    <main className="relative flex-1 border-l border-t border-[#999] bg-[#333]">
      <p className="pl-1 pt-[5px] text-[13px] leading-[18px] text-black">[−][俯视][二维线框]</p>
      <div className="absolute left-[196px] top-0 h-[397px] w-px bg-[#262]" />
      <div className="absolute left-[196px] right-0 top-[395px] h-px bg-[#722]" />
      <OutlineDialog />
    </main>
  );
}

function LayoutTabs() {
  const arrows = ["M2 0v12M11 0L4 6l7 6z", "M10 0L3 6l7 6z", "M3 0l7 6-7 6z", "M2 0l7 6-7 6zM11 0v12"];
  return (
    <div className="flex h-[21px] shrink-0 border-t border-[#666] bg-white pl-[3px] text-[15px] leading-4 text-black">
      {arrows.map((d) => (
        <button key={d} aria-label="scroll tabs" className="flex w-[18px] items-center justify-center border-r border-[#999] pb-1">
          <svg viewBox="0 0 13 12" className="h-[10px] w-[11px]" fill="#555" stroke="#555">
            <path d={d} />
          </svg>
        </button>
      ))}
      <button className="w-[58px] bg-[#333] pb-1 text-white [clip-path:polygon(0_0,100%_0,calc(100%-6px)_100%,6px_100%)]">模型</button>
      {["布局1", "布局2"].map((name) => (
        <div key={name} className="flex">
          <button className="w-12 pb-1">{name}</button>
          <svg viewBox="0 0 10 20" className="h-5 w-[10px]" stroke="#333">
            <path d="M9 0L2 19.500" />
          </svg>
        </div>
      ))}
      <div className="flex-1" />
      <div className="w-[6px] bg-[#ccc]" />
      <button aria-label="scroll left" className="flex w-[187px] items-center pb-1 pl-2">
        <svg viewBox="0 0 6 8" className="w-[6px]" fill="none" stroke="#333" strokeWidth="1.500">
          <path d="M5 .5L1.500 4 5 7.500" />
        </svg>
      </button>
    </div>
  );
}

const LOG = [
  "命令: VERT",
  " 请输入整体成图的插入点：",
  "命令: 指定对角点或 [栏选(F)/圈围(WP)/圈交(CP)]:",
  "命令: _.erase 找到 2232 个",
  "命令: VERT",
];

function CommandLine() {
  return (
    <div className="relative flex shrink-0 border-t-[5px] border-[#666] bg-[#ccc]">
      <div className="flex w-[30px] shrink-0 flex-col items-center gap-[14px] border-r border-[#666] bg-[linear-gradient(#999_30px,#666_30px,#666_124px,#333_124px)] pt-5">
        <button aria-label="关闭">
          <svg viewBox="0 0 12 12" className="size-3" stroke="#fff" strokeWidth="2">
            <path d="M1 1l10 10M11 1L1 11" />
          </svg>
        </button>
        <button aria-label="自定义">
          <Icon name="wrench" className="size-[18px]" />
        </button>
      </div>
      <div className="min-w-0 flex-1">
        <div className="px-1 pb-1 pt-[15px] text-xl font-light text-[#111]">
          {LOG.map((line, i) => (
            <p key={i} className="h-[23px] leading-[23px]">
              <Mono text={line} latin={LATIN_LG} />
            </p>
          ))}
        </div>
        <div className="flex h-[29px] items-center border-b border-t border-[#666] bg-white pl-[6px]">
          <span className="flex h-[17px] w-[18px] items-center justify-center border border-[#bbb] bg-[#ccc]">
            <svg viewBox="0 0 14 12" className="h-3 w-[14px]" fill="none" stroke="#556">
              <path d="M1 2l4 4-4 4M7 10.500h6" strokeWidth="1.500" />
            </svg>
          </span>
          <button aria-label="最近使用的命令" className="ml-1">
            <Caret className="text-[#999]" />
          </button>
          <input
            aria-label="命令"
            placeholder="键入命令"
            className="ml-[11px] h-full min-w-0 flex-1 bg-transparent pb-1 text-xl font-light italic placeholder:text-[#999]"
          />
        </div>
      </div>
      <div className="absolute right-0 top-[87px] flex h-[22px] w-[86px] items-center gap-[10px] overflow-hidden bg-white pl-[17px] text-[#36c]">
        <span className="text-[15px] font-bold leading-5">中</span>
        <svg viewBox="0 0 14 14" className="w-[13px] shrink-0" fill="none" stroke="#39c" strokeWidth="1.500">
          <circle cx="3" cy="5" r="2" />
          <path d="M11 6.500v2q0 2-2 3" strokeWidth="3" />
        </svg>
        <svg viewBox="0 0 16 16" className="w-4 shrink-0" fill="none" stroke="#36c" strokeWidth="1.500">
          <circle cx="8" cy="8" r="7" />
          <path d="M5.500 4.500v3M10.500 4.500v3M4 9q4 5 8 0" />
        </svg>
      </div>
      <svg viewBox="0 0 28 28" className="absolute right-[75px] top-[83px] size-7">
        <rect x="2" y="2" width="24" height="24" rx="3" fill="#f52" transform="rotate(-10 14 14)" />
        <path d="M21 8q-14-3-14 2c0 4 14 2 14 6.500q-1 4.500-14 2.500" fill="none" stroke="#fff" strokeWidth="4" />
      </svg>
    </div>
  );
}

const STATUS = ["infer", "snap", "grid", "ortho", "polar", "osnap", "osnap3d", "otrack", "ducs", "dyn", "lwt", "tpy", "qp", "sc", "am"];
const ACTIVE = ["grid", "dyn", "tpy"];

function StatusBar() {
  return (
    <footer className="flex h-[22px] shrink-0 border-t border-black bg-[linear-gradient(#999_17px,#666_17px)] pl-px">
      <output className={clsx("w-[282px] border-r border-[#666] pl-3 leading-[21px] text-black", LATIN)}>
        35394.4606, -10697.7842, 0.0000
      </output>
      {STATUS.map((name) => (
        <button
          key={name}
          aria-label={name}
          className={clsx(
            "flex w-[22px] items-center justify-center border-r border-[#666]",
            ACTIVE.includes(name)
              ? "bg-[linear-gradient(#cff_50%,#9cc_60%)]"
              : "bg-[linear-gradient(#ccc_55%,#99c_60%,#999_65%)]",
          )}
        >
          <Icon name={name} />
        </button>
      ))}
    </footer>
  );
}

export default function App() {
  return (
    <div className="relative flex h-screen min-h-[1000px] flex-col overflow-hidden border border-black bg-[#666] font-['Open_Sans','Noto_Sans_CJK_SC',sans-serif]">
      <TitleBar />
      <nav className="flex h-[26px] shrink-0 items-center gap-7 overflow-hidden whitespace-nowrap border-t border-[#333] bg-[linear-gradient(#999_13px,#666_13px)] pl-[57px] text-[15px] text-white">
        {MENUS.map((m) => (
          <button key={m}>{m}</button>
        ))}
      </nav>
      <AppButton />
      <Toolbars />
      <div className="flex flex-1">
        <DrawBar />
        <div className="flex min-w-0 flex-1 flex-col">
          <Drawing />
          <LayoutTabs />
        </div>
      </div>
      <CommandLine />
      <StatusBar />
      <div className="flex h-2 shrink-0 items-end justify-between overflow-hidden border-b-2 border-white bg-[#ccc] pl-[3px] pr-2 text-sm leading-4 text-[#666]">
        <span className="flex gap-3">
          <svg viewBox="0 0 14 16" className="w-[14px]" fill="none" stroke="#c96">
            <path d="M.5.5h13v13H.5zM7 .5v13M.5 7h13" />
          </svg>
          今日优选
        </span>
        <span className="flex gap-[5px]">
          <svg viewBox="0 0 16 16" className="w-4" fill="none" stroke="#396">
            <path d="M.5.5h15v13H.5zM5 10l4-3" />
          </svg>
          <span>快剪辑</span>
          <svg viewBox="0 0 16 16" className="mx-2 w-4" fill="none" stroke="#396">
            <circle cx="8" cy="7" r="6.500" />
          </svg>
          <span>今日</span>
        </span>
      </div>
    </div>
  );
}
